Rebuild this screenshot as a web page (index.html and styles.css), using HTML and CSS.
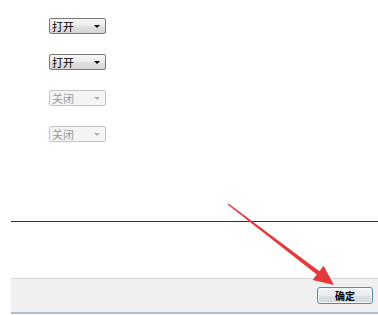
FILE: index.html
```html
<!DOCTYPE html>
<html lang="zh-CN">
<head>
  <meta charset="UTF-8" />
  <title>设置</title>
  <link rel="stylesheet" href="styles.css">
</head>
<body>
  <div class="options">
    <div class="dropdown">
      <span>打开</span>
      <svg class="caret" width="6" height="3" viewBox="0 0 6 3"><path d="M0 0h6L3 3z"/></svg>
    </div>
    <div class="dropdown">
      <span>打开</span>
      <svg class="caret" width="6" height="3" viewBox="0 0 6 3"><path d="M0 0h6L3 3z"/></svg>
    </div>
    <div class="dropdown disabled">
      <span>关闭</span>
      <svg class="caret" width="6" height="3" viewBox="0 0 6 3"><path d="M0 0h6L3 3z"/></svg>
    </div>
    <div class="dropdown disabled">
      <span>关闭</span>
      <svg class="caret" width="6" height="3" viewBox="0 0 6 3"><path d="M0 0h6L3 3z"/></svg>
    </div>
  </div>

  <div class="divider"></div>
  <div class="blank"></div>

  <!-- нижняя панель с кнопкой -->
  <div class="footer">
    <button class="ok-button">确定</button>
  </div>

  <!-- красная стрелка поверх -->
  <svg class="arrow" width="378" height="315" viewBox="0 0 378 315">
    <polygon points="227.6,204.5 316.8,274.6 312.6,280.1 334,285 323.6,265.7 319.4,271.2 228.4,203.5" fill="#e5383b"/>
  </svg>
</body>
</html>
```

FILE: styles.css
```css
body {
  margin: 0;
  background: #fff;
  font-family: "Noto Sans CJK SC", "DejaVu Sans", sans-serif;
  font-size: 11px;
  color: #000;
  position: relative;
  width: 378px;
  height: 315px;
  overflow: hidden;
}
.options {
  padding: 18px 0 0 49px;
  display: flex;
  flex-direction: column;
  gap: 20px;
}
.dropdown {
  box-sizing: border-box;
  width: 57px;
  height: 16px;
  border: 1px solid #777;
  border-radius: 2px;
  background: linear-gradient(#f6f6f6, #ececec 50%, #e0e0e0 51%, #d6d6d6);
  display: flex;
  align-items: center;
  justify-content: space-between;
  padding: 0 5px 0 2px;
  line-height: 14px;
}
.dropdown .caret {
  fill: #000;
}
.dropdown.disabled {
  border-color: #c2c4c6;
  background: #f4f4f4;
  color: #9a9a9a;
}
.dropdown.disabled .caret {
  fill: #b0b0b0;
}
.divider {
  margin: 79px 0 0 11px;
  height: 1px;
  background: #333;
}
.blank {
  height: 56px;
}
.footer {
  margin-left: 11px;
  height: 33px;
  border-top: 1px solid #d8d8d8;
  border-bottom: 2px solid #a9bfd6;
  background: #f0f0f2;
  display: flex;
  justify-content: flex-end;
  align-items: flex-start;
  padding-right: 5px;
}
.ok-button {
  margin-top: 8px;
  box-sizing: border-box;
  width: 56px;
  height: 17px;
  border: 1px solid #5b87ad;
  border-radius: 3px;
  background: linear-gradient(#f4f6f8, #e8ecef 50%, #dde2e6 51%, #d2d8dc);
  box-shadow: inset 0 0 0 1px rgba(255,255,255,0.8);
  font-family: inherit;
  font-size: 10px;
  font-weight: 700;
  color: #000;
  padding: 0;
  line-height: 15px;
}
.arrow {
  position: absolute;
  left: 0;
  top: 0;
  pointer-events: none;
}
```
